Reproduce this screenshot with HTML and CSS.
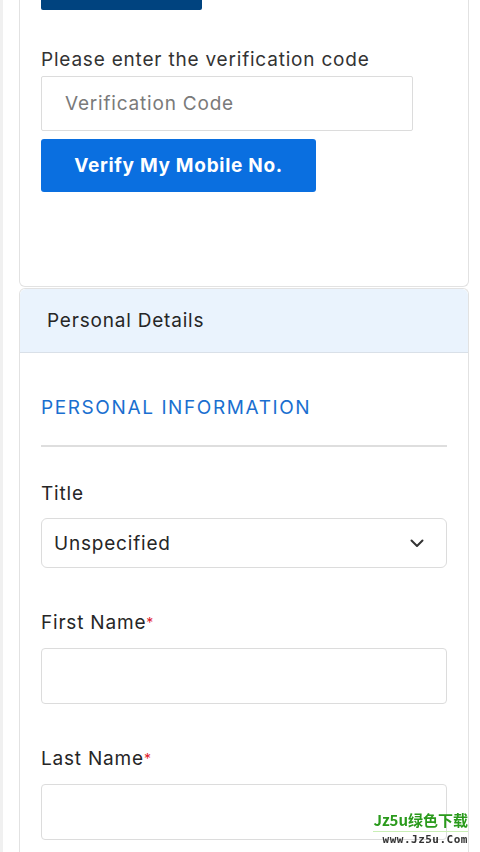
FILE: index.html
```html
<!DOCTYPE html>
<html lang="en" dir="ltr">
<head>
    <meta charset="utf-8">
    <title>Verify Mobile - Personal Details</title>
    <meta name="viewport" content="width=device-width, initial-scale=1.0">
    <link rel="stylesheet" href="styles.css">
</head>
<body>
    <div class="page">
        <div class="card card-verify">
            <div class="top-bar"></div>
            <label class="field-label" for="code">Please enter the verification code</label>
            <input class="text-input code-input" id="code" type="text" placeholder="Verification Code">
            <button class="btn-primary" type="button">Verify My Mobile No.</button>
        </div>

        <div class="card card-details">
            <div class="card-header">Personal Details</div>
            <div class="card-body">
                <h2 class="section-title">PERSONAL INFORMATION</h2>
                <div class="divider"></div>

                <div class="field field-first">
                    <label class="field-label" for="title">Title</label>
                    <div class="select-box" id="title">
                        <span>Unspecified</span>
                        <svg width="14" height="9" viewBox="0 0 14 9">
                            <path d="M1.5 1.5 L7 7 L12.5 1.5" fill="none" stroke="#333" stroke-width="2" stroke-linecap="round" stroke-linejoin="round"/>
                        </svg>
                    </div>
                </div>

                <div class="field">
                    <label class="field-label" for="first">First Name<span class="req">*</span></label>
                    <input class="text-input" id="first" type="text">
                </div>

                <div class="field">
                    <label class="field-label" for="last">Last Name<span class="req">*</span></label>
                    <input class="text-input" id="last" type="text">
                </div>
            </div>
        </div>
    </div>

    <div class="watermark">
        <div class="wm-top">Jz5u绿色下载</div>
        <div class="wm-bottom">www.Jz5u.Com</div>
    </div>
</body>
</html>
```

FILE: styles.css
```css
body {
    font-family: Inter, "Open Sans", sans-serif;
    margin: 0;
    padding: 0;
    background-color: #fff;
    color: #262626;
    height: 852px;
    overflow: hidden;
    letter-spacing: 0.8px;
}
.page {
    border-left: 3px solid #f0f0f0;
    padding-left: 16px;
    padding-right: 11px;
    min-height: 852px;
}
.card {
    border: 1px solid #e2e2e2;
    background: #fff;
}
.card-verify {
    border-top: none;
    border-radius: 0 0 6px 6px;
    padding: 0 21px 94px 21px;
    display: flex;
    flex-direction: column;
    align-items: flex-start;
}
.top-bar {
    width: 161px;
    height: 10px;
    background-color: #00437f;
    border-radius: 0 0 2px 2px;
}
.field-label {
    display: block;
    font-size: 19px;
    line-height: 24px;
    color: #262626;
}
.card-verify .field-label {
    margin-top: 38px;
    color: #333;
}
.text-input {
    display: block;
    box-sizing: border-box;
    width: 100%;
    height: 56px;
    margin-top: 13px;
    padding: 0 23px;
    border: 1px solid #dcdcdc;
    border-radius: 4px;
    font-family: inherit;
    font-size: 19px;
    letter-spacing: 0.8px;
    color: #333;
    background: #fff;
}
.text-input::placeholder {
    color: #7a7a7a;
}
.code-input {
    width: 372px;
    height: 55px;
    margin-top: 4px;
    border-radius: 2px;
}
.btn-primary {
    margin-top: 8px;
    width: 275px;
    height: 53px;
    background-color: #0a6fe0;
    color: #fff;
    border: none;
    border-radius: 3px;
    font-family: inherit;
    font-size: 19px;
    font-weight: 700;
    letter-spacing: 0.7px;
    cursor: pointer;
}
.card-details {
    margin-top: 1px;
    border-radius: 6px 6px 0 0;
    border-bottom: none;
    min-height: 600px;
}
.card-header {
    height: 64px;
    box-sizing: border-box;
    padding-left: 27px;
    background-color: #eaf3fd;
    border-bottom: 1px solid #d9e0e8;
    border-radius: 6px 6px 0 0;
    display: flex;
    align-items: center;
    font-size: 19px;
    color: #262626;
}
.card-body {
    padding: 0 21px;
}
.section-title {
    margin: 43px 0 0 0;
    font-size: 19px;
    line-height: 24px;
    font-weight: 400;
    color: #1a6fd0;
    letter-spacing: 1.6px;
}
.divider {
    margin-top: 25px;
    height: 2px;
    background-color: #dedede;
}
.field {
    margin-top: 43px;
}
.field-first {
    margin-top: 35px;
}
.select-box {
    margin-top: 12px;
    height: 50px;
    box-sizing: border-box;
    border: 1px solid #dcdcdc;
    border-radius: 6px;
    padding: 0 22px 0 12px;
    display: flex;
    align-items: center;
    justify-content: space-between;
    font-size: 19px;
    color: #262626;
}
.req {
    color: #e0202a;
    font-size: 14px;
    vertical-align: top;
}
.watermark {
    position: fixed;
    right: 12px;
    bottom: 4px;
    text-align: right;
    letter-spacing: 0;
    font-family: "DejaVu Sans Mono", "Noto Sans CJK SC", monospace;
}
.wm-top {
    font-family: "Noto Sans CJK SC", sans-serif;
    font-weight: 700;
    font-size: 15px;
    line-height: 22px;
    color: #2a9a1c;
    border-bottom: 1px solid #c9efb5;
}
.wm-bottom {
    font-size: 11px;
    line-height: 16px;
    font-weight: 700;
    color: #333;
    letter-spacing: 0.5px;
}
```
